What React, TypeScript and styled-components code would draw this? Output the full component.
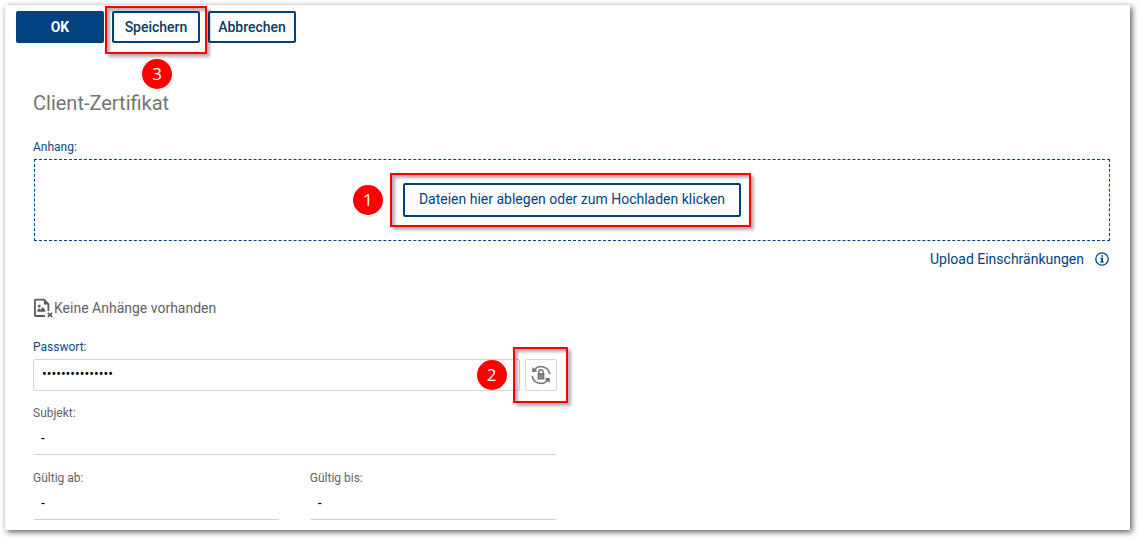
import React, { useState } from "react";
import styled, { createGlobalStyle, css } from "styled-components";

const navy = "#00427f";
const labelNavy = "#0b4a84";

const GlobalStyle = createGlobalStyle`
  *, *::before, *::after { box-sizing: border-box; }
  body {
    margin: 0;
    background: #fff;
    font-family: Roboto, "Liberation Sans", sans-serif;
    font-size: 14px;
    line-height: 20px;
    color: #626262;
  }
  button, input { font: inherit; }
`;

const Panel = styled.main`
  margin: 5px 9px 9px 5px;
  padding: 6px 20px 10px 11px;
  background: #fff;
  box-shadow: 2px 2px 6px rgba(0, 0, 0, 0.65);
`;

const Toolbar = styled.div`
  display: flex;
  gap: 8px;
`;

const ToolbarButton = styled.button<{ $primary?: boolean }>`
  width: 88px;
  height: 32px;
  padding: 0;
  border: 2px solid ${navy};
  border-radius: 2px;
  background: ${(p) => (p.$primary ? navy : "#fff")};
  color: ${(p) => (p.$primary ? "#fff" : "#0c3a66")};
  font-weight: ${(p) => (p.$primary ? 700 : 500)};
  cursor: pointer;
`;

const Marked = styled.div`
  position: relative;
  display: flex;
`;

const MarkFrame = styled.span<{ $inset: string }>`
  position: absolute;
  z-index: 1;
  inset: ${(p) => p.$inset};
  border: 2px solid #f00;
  box-shadow: 3px 3px 3px rgba(0, 0, 0, 0.3), inset 3px 3px 3px rgba(0, 0, 0, 0.3);
  pointer-events: none;
`;

const MarkNumber = styled.span<{ $side: "left" | "below"; $distance: number }>`
  position: absolute;
  z-index: 2;
  display: grid;
  place-items: center;
  width: 30px;
  height: 30px;
  border-radius: 50%;
  background: #f00;
  color: #fff;
  font-family: "Open Sans", sans-serif;
  font-size: 17px;
  pointer-events: none;
  ${(p) =>
    p.$side === "left"
      ? css`
          right: calc(100% + ${p.$distance}px);
          top: calc(50% - 15px);
        `
      : css`
          top: calc(100% + ${p.$distance}px);
          left: calc(50% - 14px);
        `}
`;

const Content = styled.section`
  padding: 48px 0 0 17px;
`;

const Title = styled.h1`
  margin: 0 0 24px;
  font-size: 20px;
  line-height: 24px;
  font-weight: 400;
  color: #757575;
`;

const Label = styled.label<{ $editable?: boolean }>`
  display: block;
  font-size: 12px;
  line-height: 16px;
  color: ${(p) => (p.$editable ? labelNavy : "#626262")};
  margin-bottom: ${(p) => (p.$editable ? 4 : 2)}px;
`;

const DropZone = styled.div`
  display: flex;
  align-items: center;
  justify-content: center;
  height: 82px;
  margin-left: 1px;
  border: 1px dashed ${navy};
`;

const UploadButton = styled.button`
  height: 34px;
  padding: 0 14px 2px;
  border: 2px solid ${navy};
  border-radius: 2px;
  background: #fff;
  color: ${navy};
  cursor: pointer;
`;

const Restrictions = styled.a`
  display: flex;
  align-items: center;
  justify-content: flex-end;
  gap: 11px;
  margin: 8px 1px 0 0;
  color: ${navy};
  text-decoration: none;
`;

const EmptyNote = styled.p`
  display: flex;
  align-items: center;
  height: 20px;
  margin: 29px 0 21px;
`;

const Columns = styled.div`
  display: grid;
  grid-template-columns: 1fr 1fr;
  column-gap: 30px;
`;

const Form = styled.form`
  display: flex;
  flex-direction: column;
`;

const PasswordRow = styled.div`
  display: flex;
  gap: 5px;
  margin-bottom: 14px;
`;

const PasswordInput = styled.input`
  flex: 1;
  min-width: 0;
  height: 32px;
  padding: 0 8px 2px;
  border: 1px solid #d4d4d4;
  border-radius: 2px;
  background: #fff;
  color: #000;
  outline: none;
`;

const IconButton = styled.button`
  display: grid;
  place-items: center;
  width: 32px;
  height: 32px;
  padding: 0;
  border: 1px solid #d4d4d4;
  border-radius: 2px;
  background: #fff;
  cursor: pointer;
`;

const ReadonlyInput = styled.input`
  display: block;
  width: 100%;
  height: 32px;
  padding: 0 8px 2px;
  border: 0;
  border-bottom: 1px solid #d0d0d0;
  border-radius: 2px;
  background: transparent;
  color: #000;
  outline: none;
`;

const DateColumns = styled(Columns)`
  margin-top: 15px;
`;

const InfoIcon = () => (
  <svg width="14" height="14" viewBox="0 0 14 14" fill="none" aria-hidden="true">
    <circle cx="7" cy="7" r="6.2" stroke={navy} strokeWidth="1.3" />
    <path d="M6.2 3.2h1.8v1.5H6.2zM5.2 5.8H8v3.6h1v1H5v-1h1.2V6.8h-1z" fill={navy} />
  </svg>
);

const NoFileIcon = () => (
  <svg width="21" height="20" viewBox="0 0 21 20" fill="none" aria-hidden="true">
    <path d="M12 18H2.800a.9.9 0 0 1-.9-.9V2.600c0-.5.4-.9.9-.9h8.200l4.400 4.400v7" stroke="#5c5c62" strokeWidth="1.800" />
    <path d="M10.800 1.200v5.200H16z" fill="#5c5c62" />
    <circle cx="6.300" cy="8.200" r="1.400" fill="#5c5c62" />
    <path d="M4.300 13.700v-1.700l1.800-1.700 1.500 1.400 2.200-2.700 2.400 2.800v1.900z" fill="#5c5c62" />
    <path d="M14.800 14.800l4.400 4M19.200 14.800l-4.400 4" stroke="#5c5c62" strokeWidth="1.700" />
  </svg>
);

const ResetPasswordIcon = () => (
  <svg width="20" height="20" viewBox="0 0 20 20" fill="none" aria-hidden="true">
    <path d="M3.200 4.900A8.800 8.800 0 0 1 18.800 9.200M1.200 10.800A8.800 8.800 0 0 0 16.800 15.100" stroke="#777" strokeWidth="1.600" />
    <path d="M1.300 2.300v4.900l5.200-.7zM18.700 17.700v-4.900l-5.200.7z" fill="#6a6a6a" />
    <path d="M7.800 9V6.900a2.200 2.200 0 0 1 4.400 0V9" stroke="#777" strokeWidth="1.400" />
    <path d="M7.300 9h5.400v4.800H7.300z" stroke="#6a6a6a" strokeWidth="1.300" fill="#a0a0a0" />
    <path d="M10 10v2.400" stroke="#666" strokeWidth="1.200" />
  </svg>
);

interface ReadonlyFieldProps {
  id: string;
  label: string;
}

const ReadonlyField = ({ id, label }: ReadonlyFieldProps) => (
  <div>
    <Label htmlFor={id}>{label}</Label>
    <ReadonlyInput id={id} readOnly value="-" />
  </div>
);

export default function App() {
  const [password, setPassword] = useState("certificate-pwd");

  return (
    <>
      <GlobalStyle />
      <Panel>
        <Toolbar>
          <ToolbarButton $primary type="button">OK</ToolbarButton>
          <Marked>
            <ToolbarButton type="button">Speichern</ToolbarButton>
            <MarkFrame $inset="-5px -7px -11px" />
            <MarkNumber $side="below" $distance={16}>3</MarkNumber>
          </Marked>
          <ToolbarButton type="button">Abbrechen</ToolbarButton>
        </Toolbar>

        <Content>
          <Title>Client-Zertifikat</Title>

          <Label $editable htmlFor="upload">Anhang:</Label>
          <DropZone>
            <Marked>
              <UploadButton id="upload" type="button">
                Dateien hier ablegen oder zum Hochladen klicken
              </UploadButton>
              <MarkFrame $inset="-10px -10px -10px -13px" />
              <MarkNumber $side="left" $distance={20}>1</MarkNumber>
            </Marked>
          </DropZone>
          <Restrictions href="#">
            Upload Einschränkungen
            <InfoIcon />
          </Restrictions>

          <EmptyNote>
            <NoFileIcon />
            Keine Anhänge vorhanden
          </EmptyNote>

          <Columns>
            <Form>
              <Label $editable htmlFor="password">Passwort:</Label>
              <PasswordRow>
                <PasswordInput
                  id="password"
                  type="password"
                  autoComplete="off"
                  value={password}
                  onChange={(e) => setPassword(e.target.value)}
                />
                <Marked>
                  <IconButton type="button" aria-label="Passwort ändern">
                    <ResetPasswordIcon />
                  </IconButton>
                  <MarkFrame $inset="-12px -11px -12px -12px" />
                  <MarkNumber $side="left" $distance={18}>2</MarkNumber>
                </Marked>
              </PasswordRow>
              <ReadonlyField id="subject" label="Subjekt:" />
              <DateColumns>
                <ReadonlyField id="valid-from" label="Gültig ab:" />
                <ReadonlyField id="valid-to" label="Gültig bis:" />
              </DateColumns>
            </Form>
          </Columns>
        </Content>
      </Panel>
    </>
  );
}
